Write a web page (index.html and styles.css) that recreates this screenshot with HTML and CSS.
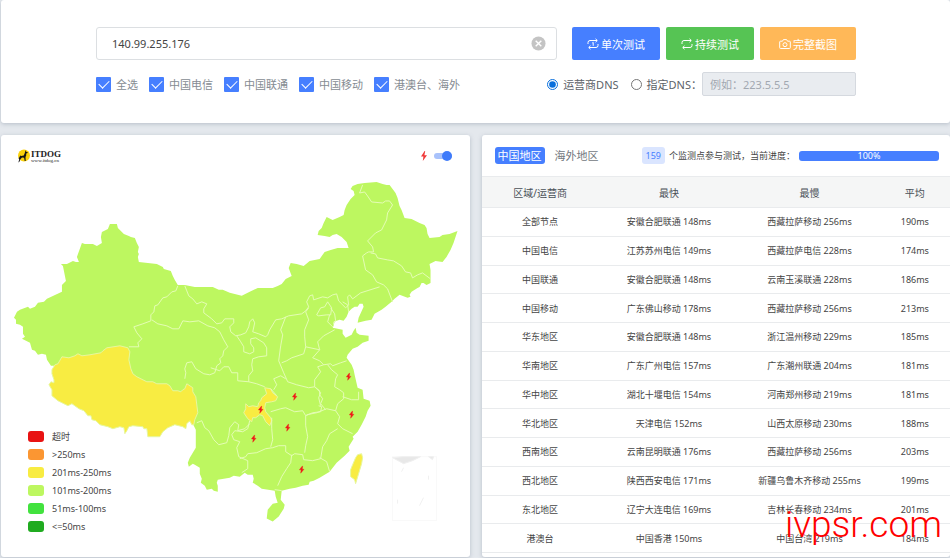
FILE: index.html
```html
<!DOCTYPE html>
<html lang="zh-CN">
<head>
  <meta charset="utf-8">
  <title>ITDOG</title>
  <meta name="viewport" content="width=device-width, initial-scale=1">
  <link rel="stylesheet" href="styles.css">
</head>
<body>
  <!-- Test form -->
  <form class="card test-form" onsubmit="return false">
    <div class="form-row">
      <div class="host-box">
        <input type="text" class="host" aria-label="host" value="140.99.255.176">
        <button type="button" class="clear" aria-label="clear">
          <svg viewBox="0 0 16 16"><circle cx="8" cy="8" r="7.5" fill="#c4c4c4"/><path d="M5 5l6 6M11 5l-6 6" stroke="#fff" stroke-width="1.5"/></svg>
        </button>
      </div>
      <div class="buttons">
        <button type="button" class="btn btn-blue">
          <svg viewBox="0 0 12 12"><path d="M1 6V4.500a2 2 0 0 1 2-2h7M8.500 .8l1.800 1.700-1.800 1.700M11 6v1.500a2 2 0 0 1-2 2H2M3.500 7.800L1.700 9.500l1.800 1.700M5.300 5l.9-.6v3.400"/></svg>单次测试
        </button>
        <button type="button" class="btn btn-green">
          <svg viewBox="0 0 12 12"><path d="M1 6V4.500a2 2 0 0 1 2-2h7M8.500 .8l1.800 1.700-1.800 1.700M11 6v1.500a2 2 0 0 1-2 2H2M3.500 7.800L1.700 9.500l1.800 1.700"/></svg>持续测试
        </button>
        <button type="button" class="btn btn-orange">
          <svg viewBox="0 0 12 12"><path d="M1.500 3.200h2l.9-1.600h3.200l.9 1.600h2a.8.8 0 0 1 .8.8v5.700a.8.8 0 0 1-.8.800h-9a.8.8 0 0 1-.8-.8V4a.8.8 0 0 1 .8-.8z"/><circle cx="6" cy="6.700" r="2"/></svg>完整截图
        </button>
      </div>
    </div>
    <div class="form-row options">
      <div class="checks">
        <label><input type="checkbox" checked>全选</label>
        <label><input type="checkbox" checked>中国电信</label>
        <label><input type="checkbox" checked>中国联通</label>
        <label><input type="checkbox" checked>中国移动</label>
        <label><input type="checkbox" checked>港澳台、海外</label>
      </div>
      <div class="dns">
        <label><input type="radio" name="dns" checked>运营商DNS</label>
        <label><input type="radio" name="dns">指定DNS：</label>
        <input type="text" class="dns-host" aria-label="DNS" placeholder="例如：223.5.5.5" disabled>
      </div>
    </div>
  </form>

  <div class="panels">
    <!-- Map -->
    <section class="card map-card">
      <div class="map-head">
        <a href="#" class="logo">
          <svg viewBox="0 0 14 14"><circle cx="7" cy="6.500" r="6" fill="#fbd20a"/><path d="M8.500 1l.4 1.400 2 1-.3.7-1.400.3v2l-.7 1.600.2 4h-1l-.6-3.200-2.100-.2-1.600 1.600-1 2.600-1 .6.800-3.200L1.500 9l.8-.6.9-2 1 .6 2.600-.6 1-2.400z" fill="#151515"/></svg>
          <span><b>ITDOG</b><small>www.itdog.cn</small></span>
        </a>
        <label class="switch">
          <svg viewBox="0 0 8 10"><path d="M4.600 0L1 5.600h2.400L2.800 10 7 4.200H4.400L5.200 0z" fill="#f03a3a"/></svg>
          <input type="checkbox" aria-label="flash" checked>
        </label>
      </div>
      <svg class="map" viewBox="1 175 469 382">
        <defs><path id="bolt" d="M.5-3.500l-2.800 3.700h1.800L-1 3.500l3.300-3.900H.6L1-3.500z"/></defs>
        <path class="land" d="M110 224L117 224 118 228 121 231 124 234 129 236 131 237 135 238 137 243 139 247 138 252 139 254 138 257 139 262 148 263 157 264 163 267 164 269 171 271 173 276 175 280 178 285 185 285 195 287 213 287 219 290 223 290 230 293 238 295 242 296 250 292 258 288 273 288 278 286 282 284 286 279 292 276 289 268 291 263 297 264 304 266 310 261 320 259 325 252 331 250 338 248 349 248 347 242 342 237 337 234 333 235 330 237 325 236 318 235 319 231 322 228 324 223 327 217 333 220 340 217 344 215 345 210 347 205 351 199 355 195 354 191 351 189 353 186 358 184 365 183 377 182 383 184 387 185 390 185 393 189 396 193 398 198 400 206 402 210 405 218 412 219 420 223 425 225 427 228 428 234 430 238 440 237 443 235 450 234 458 231 456 237 454 243 451 250 447 257 443 262 436 261 430 264 431 270 431 283 427 285 424 283 422 283 420 287 418 288 412 292 410 295 411 297 408 298 400 295 395 299 392 302 386 307 382 310 375 314 372 320 366 321 358 323 359 318 364 307 363 304 360 304 358 307 355 307 352 309 349 312 347 317 344 321 340 320 334 322 334 326 333 328 343 330 343 334 346 338 352 335 354 331 356 328 357 333 360 335 369 336 369 341 363 343 358 347 353 349 348 355 347 358 352 365 354 370 355 375 358 388 363 390 364 399 370 401 371 406 368 411 366 417 362 425 358 432 353 437 354 439 349 447 350 451 345 456 337 463 330 472 325 475 320 478 314 481 310 482 309 485 303 486 296 488 290 489 282 491 281 500 285 505 284 509 279 517 273 522 267 519 268 510 273 504 278 503 276 497 275 491 262 489 258 486 253 483 254 479 253 475 248 475 245 473 240 477 234 476 230 478 224 479 218 480 217 483 218 486 218 492 214 491 212 489 207 490 205 486 201 483 202 479 200 474 200 468 195 465 193 464 189 467 188 463 190 458 196 448 196 430 192 422 160 420 100 400 60 366 51 366 47 360 46 355 42 354 38 355 35 351 32 350 30 343 26 341 22 339 25 337 23 334 23 327 20 325 16 324 16 320 14 318 17 312 20 310 28 307 30 309 35 307 38 303 44 302 47 299 62 292 62 285 66 281 63 266 61 264 67 264 73 261 76 262 79 262 77 257 82 243 85 244 93 244 97 246 102 243 101 237 102 232 108 229z"/>
        <path class="slow" d="M52 370L55 365 58 364 62 357 69 358 75 356 78 354 82 356 90 355 101 353 103 351 107 348 120 346 128 348 130 352 129 360 131 369 133 374 137 377 147 382 153 382 157 384 167 384 170 386 173 391 178 391 181 392 183 390 185 389 187 384 193 388 193 392 196 397 198 413 195 420 194 425 192 425 190 421 187 424 186 429 183 427 175 425 168 428 163 432 160 437 148 437 147 429 144 429 143 427 133 426 129 427 127 431 125 434 124 428 120 427 113 429 108 427 100 425 96 421 92 420 91 416 88 416 84 411 79 409 72 404 68 406 58 401 52 396 52 390 49 385 51 382 54 383 54 380 52 374z"/>
        <path class="slow" d="M265 388l6 1 2 4 5 4-2 4-4 1-6 1-1 5 1 4 5 6 1 3-2 5-4-4-3-6-3-1-4 3-3 0-1 4-4-3-4-6 2-4 0-5 3 3 4-1 5 1 1-4 2-2 1-3 5-4z"/>
        <path class="slow" d="M358 455l4-1 1 4-1 6-6 20-1-4-4-3 0-7 2-5 3-7z"/>
        <g class="border">
          <path d="M178 286l-2 5-4 1-5 5-4 1-5 7-3 1-1 6-3 3 0 6-8 3-9 3 3 6 5 6-4 4 1 4-10 0"/>
          <path d="M185 286l2 5 2 5 4 3 4 5 5-2 5 2-3 5 0 4 8 6 5 5 5-1 3-4 9 0 0 4-4 4 1 5 5 4 5-1 5-2 3-6 1-5 3-3 2 4-2 9 6 2 7 3 2-2 2-5 6-10 6-1 7-3 13-2 4-3 3-4-2-5 3-6 3-1 1 5 9-3 5 1 5-3 4-1 2 7 7 7 3-3-1-8 2-2 3 4 8-6 19-6"/>
          <path d="M152 320l6 4 9 2 6 3 6 0 4-8 7 1 9-1 9 5 7 2 5 4 4 8 4 7-4 4-1 5-3 3 1 4-4 3-2 7-5 2-6-1-8-5-4-7-5 1-2 6 1 4-1 6"/>
          <path d="M211 368l9 3 4-4 5 0 3 6 6 0 0 8 11 1 0-6 4-5-1-6 1-6M237 336l4 6 3 5 0 5 6 2 4-2 0-4-3-4 0-5 5-1 8 5 3 5 0 8-8 1-6 2"/>
          <path d="M249 382l8 2 8 3M197 423l5-2 3 7 4 3 5 9 5 5 8-2 2-7 1-8 5-6 4 3-1 6 7-2 5-5M250 421l-2 8-5 3-8-1-3 4 2 5 6 2-3 6 2 9 9 4 0 8-6 4"/>
          <path d="M240 459l6-2 2-3 9-1 9-4 7-1 6-2 7 0 0 6 6 4 3-2 8 1 1 5 9 1 8-2 2-12 4-6 3-7 8-5"/>
          <path d="M286 317l-5 13 2 5-2 11-2 15 5 12 4 9 9 3 12 3 6-1 5 4 0 4 3 4-2 5 5 6M309 308l-3 4 3 8-4 10 0 7 1 10-2 7-12 4-5 3-5 2"/>
          <path d="M306 347l14 3-2-8 6-6 11-6M320 350l-7 8 7 3 4 4 7-1 2 2 8-3 6-2M324 365l-6 2 3 5-6 8 0 7 6 6-2 5 2 8"/>
          <path d="M317 315l4-7 4-1 3-5 4 6-1 7-4 0-8 1zM331 308l4 6 1 7-2 3M330 315l-2 7 5 5M343 302l5 3 1 7"/>
          <path d="M286 379l-5-3-7 3 3 6-3 5M271 389l6 7M271 412l10-3 5-1 9 4 8-1 3 5 7-3 8-1 1-5-3-1M307 415l10-2 10-4 9 2 2-7 6-5 0-6-4-3-5-3 1-8 2-4-6-5-4-5M343 397l9 3 7 0 0-8M336 411l4 6-2 7 5 5 10 5"/>
          <path d="M272 418l0 11 1 11-2 7M306 416l0 10 2 11-2 9-1 7M292 455l-1 8-4 6-5 8-4 9M320 458l7 4 3 10M275 490l7 1"/>
          <path d="M377 282l-4-7-7-5-3-14 4-3 2-1 5 0-1-5-5-6 8-8 6-3 5-10 1-7 5-8-3-4-4 0-3 2-11-1-4-6-3-4-5 1 3-8M371 253l5 1 2 4 10 2 6 1 8 5 4 6 5 1 2 5 5-3 5-2 8 6M377 282l7 3 4 4 5 13"/>
        </g>
        <g class="inset"><rect x="393" y="457" width="44" height="64"/><path d="M393 458l10-1 18 0-8 4-9 3zM429 457h5l-1 3zM404 468l-2 4M429 476v4M424 498l-4 8M398 500v4"/></g>
        <g class="bolts">
          <use href="#bolt" x="349" y="377"/>
          <use href="#bolt" x="295" y="397"/>
          <use href="#bolt" x="352" y="415"/>
          <use href="#bolt" x="261" y="410"/>
          <use href="#bolt" x="288" y="428"/>
          <use href="#bolt" x="254" y="439"/>
          <use href="#bolt" x="302" y="470"/>
        </g>
      </svg>
      <ul class="legend">
        <li class="timeout">超时</li>
        <li class="ms-over">&gt;250ms</li>
        <li class="ms-250">201ms-250ms</li>
        <li class="ms-200">101ms-200ms</li>
        <li class="ms-100">51ms-100ms</li>
        <li class="ms-50">&lt;=50ms</li>
      </ul>
    </section>

    <!-- Region results -->
    <section class="card result-card">
      <div class="result-head">
        <button type="button" class="tab active">中国地区</button>
        <button type="button" class="tab">海外地区</button>
        <div class="status">
          <span class="count">159</span>
          <span>个监测点参与测试，当前进度：</span>
          <div class="progress" role="progressbar" aria-valuenow="100">100%</div>
        </div>
      </div>
      <table class="regions">
        <thead>
          <tr><th>区域/运营商</th><th>最快</th><th>最慢</th><th>平均</th></tr>
        </thead>
        <tbody>
          <tr><td>全部节点</td><td>安徽合肥联通 148ms</td><td>西藏拉萨移动 256ms</td><td>190ms</td></tr>
          <tr><td>中国电信</td><td>江苏苏州电信 149ms</td><td>西藏拉萨电信 228ms</td><td>174ms</td></tr>
          <tr><td>中国联通</td><td>安徽合肥联通 148ms</td><td>云南玉溪联通 228ms</td><td>186ms</td></tr>
          <tr><td>中国移动</td><td>广东佛山移动 178ms</td><td>西藏拉萨移动 256ms</td><td>213ms</td></tr>
          <tr><td>华东地区</td><td>安徽合肥联通 148ms</td><td>浙江温州移动 229ms</td><td>185ms</td></tr>
          <tr><td>华南地区</td><td>广东广州电信 157ms</td><td>广东潮州联通 204ms</td><td>181ms</td></tr>
          <tr><td>华中地区</td><td>湖北十堰电信 154ms</td><td>河南郑州移动 219ms</td><td>181ms</td></tr>
          <tr><td>华北地区</td><td>天津电信 152ms</td><td>山西太原移动 230ms</td><td>188ms</td></tr>
          <tr><td>西南地区</td><td>云南昆明联通 176ms</td><td>西藏拉萨移动 256ms</td><td>203ms</td></tr>
          <tr><td>西北地区</td><td>陕西西安电信 171ms</td><td>新疆乌鲁木齐移动 255ms</td><td>199ms</td></tr>
          <tr><td>东北地区</td><td>辽宁大连电信 169ms</td><td>吉林长春移动 234ms</td><td>201ms</td></tr>
          <tr><td>港澳台</td><td>中国香港 150ms</td><td>中国台湾 219ms</td><td>184ms</td></tr>
        </tbody>
      </table>
      <div class="watermark">ivpsr.com</div>
    </section>
  </div>
</body>
</html>
```
FILE: styles.css
```css
* {
  box-sizing: border-box;
}

body {
  margin: 0;
  padding-left: 1px;
  background: #e4e8ed;
  color: #444;
  font-family: "Noto Sans", "Noto Sans CJK SC", sans-serif;
  font-size: 9px;
}

button,
input {
  margin: 0;
  font-family: inherit;
}

button {
  border: none;
  cursor: pointer;
}

.card {
  position: relative;
  background: #fff;
  border-radius: 3px;
  box-shadow: 0 1px 4px rgba(100, 115, 135, 0.35);
}

/* Test form */
.test-form {
  padding: 27px 94px 27px 95px;
  font-size: 11px;
  color: #858b92;
}

.form-row {
  display: flex;
  align-items: center;
  gap: 15px;
}

.options {
  justify-content: space-between;
  margin-top: 12px;
}

.host-box {
  position: relative;
  flex: 1;
}

.host {
  display: block;
  width: 100%;
  height: 33px;
  padding: 0 36px 0 15px;
  border: 1px solid #dcdfe2;
  border-radius: 3px;
  color: #444;
  font-size: 11px;
}

.clear {
  position: absolute;
  top: 9px;
  right: 11px;
  width: 15px;
  height: 15px;
  padding: 0;
  background: none;
}

.clear svg {
  display: block;
}

.buttons {
  display: flex;
  gap: 6px;
}

.btn {
  display: flex;
  align-items: center;
  justify-content: center;
  gap: 2px;
  height: 33px;
  padding: 0 15px;
  border-radius: 2px;
  color: #fff;
  font-size: 11px;
}

.btn svg {
  width: 12px;
  height: 12px;
  fill: none;
  stroke: #fff;
}

.btn-blue {
  background: #467fff;
}

.btn-green {
  background: #56c454;
}

.btn-orange {
  padding: 0 19px;
  background: #ffb858;
}

.checks {
  display: flex;
  gap: 11px;
}

.checks label,
.dns label {
  display: flex;
  align-items: center;
  gap: 5px;
  white-space: nowrap;
}

.checks input {
  appearance: none;
  display: grid;
  place-items: center;
  width: 15px;
  height: 15px;
  border-radius: 1px;
  background: #467fff;
}

.checks input::after {
  content: "";
  width: 9px;
  height: 5px;
  margin-bottom: 3px;
  border-left: 1px solid #fff;
  border-bottom: 1px solid #fff;
  transform: rotate(-45deg);
}

.dns {
  display: flex;
  align-items: center;
  gap: 12px;
  color: #5c6268;
}

.dns input[type="radio"] {
  width: 11px;
  height: 11px;
  accent-color: #0a6fdc;
}

.dns-host {
  width: 154px;
  height: 24px;
  margin-left: -12px;
  padding: 0 7px;
  border: 1px solid #d5d9df;
  border-radius: 2px;
  background: #e9ecf0;
  font-size: 11px;
}

.dns-host::placeholder {
  color: #a2a8b0;
}

.panels {
  display: grid;
  grid-template-columns: 1fr 1fr;
  gap: 12px;
  margin: 12px 0 1px;
}

/* Map */
.map-head {
  display: flex;
  justify-content: space-between;
  align-items: center;
  height: 40px;
  padding: 2px 18px 0 16px;
}

.logo {
  display: flex;
  align-items: center;
  color: #222;
  text-decoration: none;
  font-family: "Liberation Serif", serif;
}

.logo svg {
  width: 14px;
  height: 14px;
}

.logo b,
.logo small {
  display: block;
  font-size: 9px;
  line-height: 9px;
}

.logo small {
  font-size: 5px;
  line-height: 4px;
}

.switch {
  display: flex;
  align-items: center;
  gap: 6px;
}

.switch svg {
  width: 8px;
  height: 10px;
}

.switch input {
  appearance: none;
  display: flex;
  align-items: center;
  justify-content: flex-end;
  width: 18px;
  height: 6px;
  border-radius: 3px;
  background: #a9c2fb;
}

.switch input::after {
  content: "";
  width: 10px;
  height: 10px;
  border-radius: 50%;
  background: #3f7bfa;
}

.map {
  display: block;
  width: 100%;
}

.land {
  fill: #bdf760;
}

.slow {
  fill: #f8ec42;
  stroke: #e6f7a0;
}

.border {
  fill: none;
  stroke: #e4fcb5;
  stroke-linejoin: round;
}

.inset {
  fill: none;
  stroke: #f9f9f9;
}

.inset path {
  fill: #e8e8e8;
  stroke: #f0f0f0;
}

.bolts {
  fill: #f01818;
  stroke: #f01818;
  stroke-width: 0.4;
}

.legend {
  position: absolute;
  left: 27px;
  bottom: 24px;
  display: grid;
  gap: 6px;
  margin: 0;
  padding: 0;
  list-style: none;
}

.legend li {
  display: flex;
  align-items: center;
  gap: 8px;
  line-height: 12px;
}

.legend li::before {
  content: "";
  width: 16px;
  height: 11px;
  border-radius: 3px;
  background: #e81313;
}

.legend .ms-over::before {
  background: #fb9632;
}

.legend .ms-250::before {
  background: #f8ec42;
}

.legend .ms-200::before {
  background: #bdf760;
}

.legend .ms-100::before {
  background: #42e23e;
}

.legend .ms-50::before {
  background: #20ab20;
}

/* Region results */
.result-head {
  display: flex;
  align-items: center;
  gap: 7px;
  height: 41px;
  padding: 0 11px 0 13px;
}

.tab {
  height: 17px;
  padding: 0 3px;
  border-radius: 3px;
  background: none;
  color: #73787e;
  font-size: 11px;
  line-height: 17px;
  white-space: nowrap;
}

.tab.active {
  background: #467fff;
  color: #fff;
}

.status {
  display: flex;
  flex: 1;
  align-items: center;
  gap: 4px;
  margin-left: 33px;
  white-space: nowrap;
}

.count {
  padding: 0 4px;
  border-radius: 3px;
  background: #dae5ff;
  color: #467fff;
  line-height: 17px;
}

.progress {
  flex: 1;
  height: 10px;
  border-radius: 3px;
  background: #467fff;
  color: #fff;
  line-height: 10px;
  text-align: center;
}

.regions {
  width: 100%;
  height: 377px;
  border-collapse: collapse;
  table-layout: fixed;
  text-align: center;
  white-space: nowrap;
}

.regions th {
  width: 30%;
  height: 31px;
  padding: 0;
  background: #f5f6f6;
  border-top: 1px solid #e9ebed;
  border-bottom: 1px solid #e9ebed;
  color: #495057;
  font-size: 10px;
  font-weight: normal;
}

.regions th:first-child {
  width: 25%;
}

.regions th:last-child {
  width: 15%;
}

.regions td {
  padding: 0;
  border-bottom: 1px solid #e9ebed;
}

.watermark {
  position: absolute;
  right: 8px;
  bottom: 8px;
  color: #f00;
  font-family: Roboto, sans-serif;
  font-size: 37px;
  font-weight: 300;
  line-height: 48px;
}
```
